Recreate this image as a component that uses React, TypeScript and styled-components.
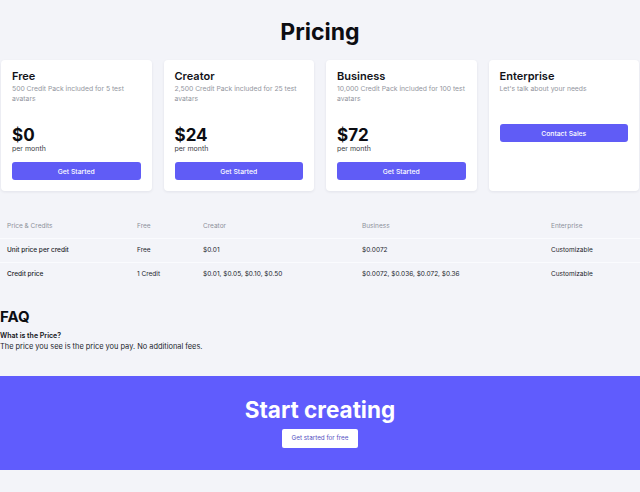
import React from 'react';
import styled, {createGlobalStyle} from 'styled-components';

const plans = [
  {
    name: 'Free',
    description: '500 Credit Pack included for 5 test avatars',
    price: '$0',
    action: 'Get Started',
  },
  {
    name: 'Creator',
    description: '2,500 Credit Pack included for 25 test avatars',
    price: '$24',
    action: 'Get Started',
  },
  {
    name: 'Business',
    description: '10,000 Credit Pack included for 100 test avatars',
    price: '$72',
    action: 'Get Started',
  },
  {
    name: 'Enterprise',
    description: "Let's talk about your needs",
    action: 'Contact Sales',
  },
];

const columns = ['Price & Credits', 'Free', 'Creator', 'Business', 'Enterprise'];

const rows = [
  ['Unit price per credit', 'Free', '$0.01', '$0.0072', 'Customizable'],
  [
    'Credit price',
    '1 Credit',
    '$0.01, $0.05, $0.10, $0.50',
    '$0.0072, $0.036, $0.072, $0.36',
    'Customizable',
  ],
];

const App = () => {
  return (
    <>
      <GlobalStyle />
      <Page>
        <Title>Pricing</Title>
        <Plans>
          {plans.map((plan) => (
            <Card key={plan.name}>
              <PlanName>{plan.name}</PlanName>
              <PlanDescription>{plan.description}</PlanDescription>
              {plan.price ? (
                <PriceBlock>
                  <Price>{plan.price}</Price>
                  <Period>per month</Period>
                </PriceBlock>
              ) : null}
              <PlanButton>{plan.action}</PlanButton>
            </Card>
          ))}
        </Plans>

        <Table>
          <HeaderRow>
            {columns.map((col) => (
              <HeaderCell key={col}>{col}</HeaderCell>
            ))}
          </HeaderRow>
          {rows.map((row) => (
            <BodyRow key={row[0]}>
              {row.map((cell, i) => (
                <BodyCell key={i} strong={i === 0}>
                  {cell}
                </BodyCell>
              ))}
            </BodyRow>
          ))}
        </Table>

        <Faq>
          <FaqTitle>FAQ</FaqTitle>
          <Question>What is the Price?</Question>
          <Answer>The price you see is the price you pay. No additional fees.</Answer>
        </Faq>

        <Banner>
          <BannerTitle>Start creating</BannerTitle>
          <BannerButton>Get started for free</BannerButton>
        </Banner>
      </Page>
    </>
  );
};

const GlobalStyle = createGlobalStyle`
  html, body {
    margin: 0;
    padding: 0;
    background: #f3f4f9;
  }
  body {
    font-family: Inter, 'Noto Sans', sans-serif;
    color: #111218;
  }
  * {
    box-sizing: border-box;
  }
`;

const Page = styled.div`
  min-height: 492px;
  padding-top: 18px;
  padding-bottom: 23px;
`;

const Title = styled.h1`
  margin: 0;
  text-align: center;
  font-size: 23px;
  line-height: 29px;
  font-weight: 700;
  color: #0c0d12;
`;

const Plans = styled.div`
  display: grid;
  grid-template-columns: repeat(4, 1fr);
  gap: 12px;
  padding: 0 1px;
  margin-top: 13px;
`;

const Card = styled.div`
  background: #fff;
  border-radius: 4px;
  box-shadow: 0 1px 3px rgba(20, 24, 60, 0.08);
  padding: 9px 11px 11px;
  display: flex;
  flex-direction: column;
  height: 131px;
`;

const PlanName = styled.div`
  font-size: 11px;
  line-height: 14px;
  font-weight: 600;
  color: #111218;
`;

const PlanDescription = styled.div`
  margin-top: 1px;
  min-height: 19px;
  margin-bottom: 21px;
  font-size: 6.8px;
  line-height: 9.5px;
  color: #93969e;
`;

const PriceBlock = styled.div`
  padding-top: 3px;
  margin-bottom: 9px;
`;

const Price = styled.div`
  font-size: 17px;
  line-height: 17px;
  font-weight: 700;
  color: #0c0d12;
`;

const Period = styled.div`
  font-size: 7px;
  line-height: 9px;
  color: #3a3c43;
`;

const PlanButton = styled.button`
  display: block;
  width: 100%;
  height: 18px;
  border: none;
  border-radius: 3px;
  background: #605cf6;
  color: #fff;
  font-family: Inter, 'Noto Sans', sans-serif;
  font-size: 6.8px;
  font-weight: 500;
  padding: 0;
  cursor: pointer;
`;

const Table = styled.div`
  margin-top: 22.7px;
`;

const HeaderRow = styled.div`
  display: grid;
  grid-template-columns: 130px 66px 159px 189px 1fr;
  height: 24px;
  align-items: center;
`;

const BodyRow = styled(HeaderRow)`
  border-top: 1px solid #fafbfe;
`;

const HeaderCell = styled.div`
  padding-left: 7px;
  font-size: 6.5px;
  color: #8c909a;
`;

const BodyCell = styled.div<{strong: boolean}>`
  padding-left: 7px;
  font-size: 6.5px;
  color: #22242b;
  font-weight: ${({strong}) => (strong ? 500 : 400)};
`;

const Faq = styled.div`
  margin-top: 22px;
`;

const FaqTitle = styled.h2`
  margin: 0;
  font-size: 15px;
  line-height: 18px;
  font-weight: 700;
  color: #0c0d12;
`;

const Question = styled.div`
  margin-top: 5px;
  font-size: 7px;
  line-height: 10px;
  font-weight: 600;
  color: #111218;
`;

const Answer = styled.div`
  margin-top: 1px;
  font-size: 7.4px;
  line-height: 10px;
  color: #22242b;
`;

const Banner = styled.section`
  margin-top: 24.5px;
  background: #605cfd;
  padding: 20px 0 22px;
  display: flex;
  flex-direction: column;
  align-items: center;
`;

const BannerTitle = styled.h2`
  margin: 0;
  font-size: 22.5px;
  line-height: 28px;
  font-weight: 700;
  color: #fff;
`;

const BannerButton = styled.button`
  margin-top: 4.5px;
  height: 19px;
  width: 76px;
  border: none;
  border-radius: 2px;
  background: #fff;
  color: #5552c2;
  font-family: Inter, 'Noto Sans', sans-serif;
  font-size: 6.3px;
  padding: 0;
  cursor: pointer;
`;

export default App;
